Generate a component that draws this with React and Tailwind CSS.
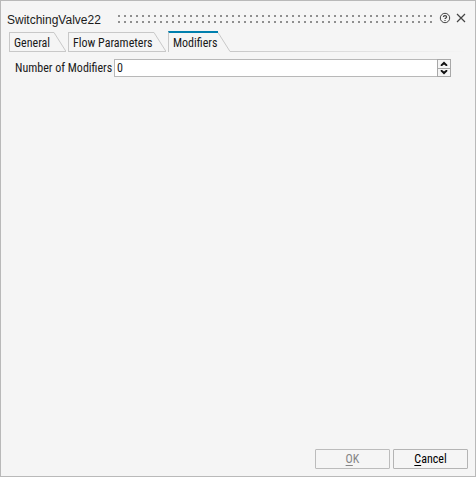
import React, { useState } from 'react';
import clsx from 'clsx';

const tabs = [
  { id: 'general', name: 'General', width: 'w-[45px]' },
  { id: 'flow', name: 'Flow Parameters', width: 'w-[86px]' },
  { id: 'modifiers', name: 'Modifiers', width: 'w-[50px]' },
];

const TitleBar = ({ title }) => (
  <header className="flex items-center h-[30px] pt-2 pl-[6px] pr-2">
    <h1 className="font-['Liberation_Sans',sans-serif] text-xs leading-4 whitespace-nowrap pr-[17px]">{title}</h1>
    {/* Drag grip */}
    <svg className="flex-1 min-w-0 h-2 -mt-[2px]" aria-hidden="true">
      <defs>
        <pattern id="grip" width="6" height="6" patternUnits="userSpaceOnUse">
          <rect width="2" height="2" fill="#8f8f8f" />
        </pattern>
      </defs>
      <rect width="100%" height="8" fill="url(#grip)" />
    </svg>
    <div className="flex items-center gap-1 pl-[7px] -mt-1">
      <button type="button" aria-label="Help" className="w-3 h-3">
        <svg viewBox="0 0 12 12" className="w-3 h-3" fill="none" stroke="#444" strokeWidth="1">
          <circle cx="6" cy="6" r="4.7" />
          <path d="M4.4 4.9C4.4 3.1 7.6 3.1 7.6 4.9C7.6 5.9 6 5.9 6 7.1M6 8v1.1" strokeWidth="1.2" />
        </svg>
      </button>
      <button type="button" aria-label="Close" className="w-3 h-3">
        <svg viewBox="0 0 12 12" className="w-3 h-3" fill="none" stroke="#444" strokeWidth="1.2">
          <path d="M2 2l8 8M10 2l-8 8" />
        </svg>
      </button>
    </div>
  </header>
);

const Tab = ({ tab, active, onSelect }) => (
  <button type="button" role="tab" aria-selected={active} onClick={onSelect} className="flex items-end">
    <span
      className={clsx(
        'block pl-1 text-left whitespace-nowrap leading-5 border-l border-l-[#c8c8c8]',
        tab.width,
        active
          ? 'h-[21px] border-t-2 border-t-[#007fae]'
          : 'h-5 border-t border-b border-t-[#c8c8c8] border-b-[#c8c8c8]'
      )}
    >
      {tab.name}
    </span>
    <svg className="w-3 h-5" viewBox="0 0 12 20" fill="none" stroke="#c8c8c8" aria-hidden="true">
      <path d={active ? 'M0 0.5L12 19.5' : 'M0 0.5L12 19.5H0'} />
    </svg>
  </button>
);

const SpinBox = ({ id, value, onChange }) => (
  <div className="flex flex-1 h-[18px]">
    <input
      id={id}
      type="number"
      min="0"
      value={value}
      onChange={(e) => onChange(Number(e.target.value))}
      className="flex-1 min-w-0 px-[2px] bg-white border border-r-0 border-[#b8b8b8] outline-none [appearance:textfield] [&::-webkit-inner-spin-button]:appearance-none"
    />
    <div className="flex flex-col w-[14px] border border-[#a8a8a8]">
      <button
        type="button"
        aria-label="Increase"
        onClick={() => onChange(value + 1)}
        className="flex flex-1 items-center justify-center border-b border-[#a8a8a8]"
      >
        <svg className="w-2 h-[6px]" viewBox="0 0 8 6" fill="#111">
          <path d="M4 0.5L7.3 3.8V5H6L4 3.4L2 5H0.7V3.8Z" />
        </svg>
      </button>
      <button
        type="button"
        aria-label="Decrease"
        onClick={() => onChange(Math.max(0, value - 1))}
        className="flex flex-1 items-center justify-center"
      >
        <svg className="w-2 h-[6px]" viewBox="0 0 8 6" fill="#111">
          <path d="M4 5.5L7.3 2.2V1H6L4 2.6L2 1H0.7V2.2Z" />
        </svg>
      </button>
    </div>
  </div>
);

export const App = () => {
  const [activeTab, setActiveTab] = useState('modifiers');
  const [count, setCount] = useState(0);

  return (
    <div className="flex flex-col min-h-screen bg-[#f5f5f5] border border-[#b9b9b9] text-xs leading-4 text-[#1a1a1a] font-['Roboto_Condensed','Liberation_Sans',sans-serif]">
      <TitleBar title="SwitchingValve22" />

      <div role="tablist" className="flex items-end gap-[2px] pl-2 pr-2">
        {tabs.map((tab) => (
          <Tab key={tab.id} tab={tab} active={tab.id === activeTab} onSelect={() => setActiveTab(tab.id)} />
        ))}
        <div className="flex-1 h-px -ml-[2px] bg-linear-to-r from-[#c8c8c8] to-[#f5f5f5]" />
      </div>

      <main className="flex-1">
        {activeTab === 'modifiers' && (
          <div className="flex items-center pt-[7px] pl-[14px] pr-6">
            <label htmlFor="modifier-count" className="w-[99px] leading-[18px] whitespace-nowrap">Number of Modifiers</label>
            <SpinBox id="modifier-count" value={count} onChange={setCount} />
          </div>
        )}
      </main>

      <footer className="flex justify-end gap-[3px] p-[7px]">
        <button type="button" disabled className="w-[75px] h-5 border border-[#bcbcbc] rounded-[1px] text-[#858585]">
          <u className="underline-offset-2">O</u>K
        </button>
        <button type="button" className="w-[75px] h-5 border border-[#b4b4b4] rounded-[1px] text-black">
          <u className="underline-offset-2">C</u>ancel
        </button>
      </footer>
    </div>
  );
};

export default App;
